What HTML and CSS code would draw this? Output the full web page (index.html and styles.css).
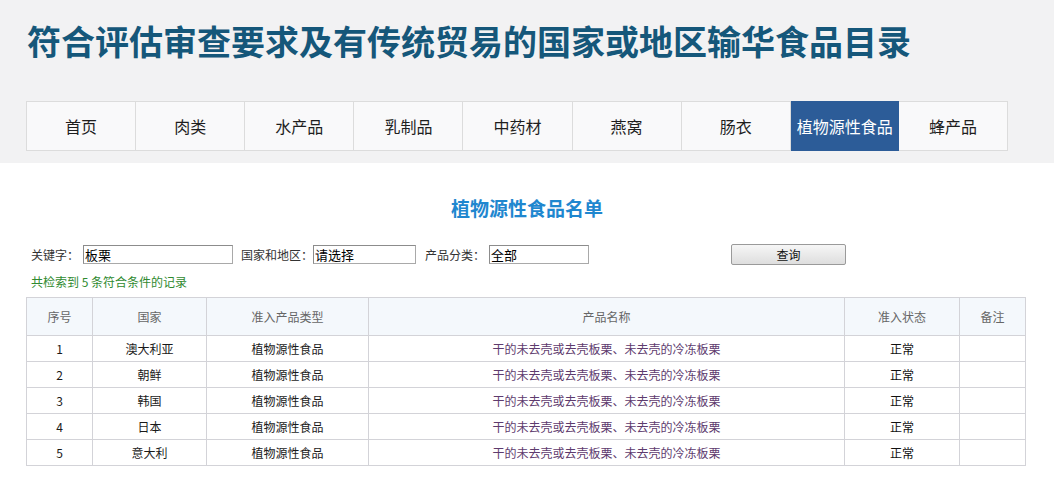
FILE: index.html
```html
<!DOCTYPE html>
<html lang="zh">
<head>
<meta charset="utf-8">
<title>符合评估审查要求及有传统贸易的国家或地区输华食品目录</title>
<link rel="stylesheet" href="styles.css">
</head>
<body>
<header class="top">
  <h1 class="site-title">符合评估审查要求及有传统贸易的国家或地区输华食品目录</h1>
  <nav class="nav">
    <a class="nav-item">首页</a>
    <a class="nav-item">肉类</a>
    <a class="nav-item">水产品</a>
    <a class="nav-item">乳制品</a>
    <a class="nav-item">中药材</a>
    <a class="nav-item">燕窝</a>
    <a class="nav-item">肠衣</a>
    <a class="nav-item active">植物源性食品</a>
    <a class="nav-item">蜂产品</a>
  </nav>
</header>
<main class="content">
  <h2 class="list-title">植物源性食品名单</h2>
  <form class="search">
    <label class="field-label">关键字：</label>
    <input class="field field-kw" type="text" value="板栗">
    <label class="field-label">国家和地区：</label>
    <input class="field field-country" type="text" value="请选择">
    <label class="field-label">产品分类：</label>
    <input class="field field-cat" type="text" value="全部">
    <button class="btn" type="button">查询</button>
  </form>
  <p class="result">共检索到&nbsp;5&nbsp;条符合条件的记录</p>
  <table class="grid">
    <colgroup>
      <col class="c1"><col class="c2"><col class="c3"><col class="c4"><col class="c5"><col class="c6">
    </colgroup>
    <thead>
      <tr><th>序号</th><th>国家</th><th>准入产品类型</th><th>产品名称</th><th>准入状态</th><th>备注</th></tr>
    </thead>
    <tbody>
      <tr><td>1</td><td>澳大利亚</td><td>植物源性食品</td><td class="pname">干的未去壳或去壳板栗、未去壳的冷冻板栗</td><td class="status">正常</td><td></td></tr>
      <tr><td>2</td><td>朝鲜</td><td>植物源性食品</td><td class="pname">干的未去壳或去壳板栗、未去壳的冷冻板栗</td><td class="status">正常</td><td></td></tr>
      <tr><td>3</td><td>韩国</td><td>植物源性食品</td><td class="pname">干的未去壳或去壳板栗、未去壳的冷冻板栗</td><td class="status">正常</td><td></td></tr>
      <tr><td>4</td><td>日本</td><td>植物源性食品</td><td class="pname">干的未去壳或去壳板栗、未去壳的冷冻板栗</td><td class="status">正常</td><td></td></tr>
      <tr><td>5</td><td>意大利</td><td>植物源性食品</td><td class="pname">干的未去壳或去壳板栗、未去壳的冷冻板栗</td><td class="status">正常</td><td></td></tr>
    </tbody>
  </table>
</main>
</body>
</html>
```
FILE: styles.css
```css
* { box-sizing: border-box; }
html, body { margin: 0; padding: 0; background: #fff; }
body {
  font-family: "Noto Sans CJK SC", "Noto Sans", "Liberation Sans", sans-serif;
  color: #222;
  width: 1054px;
  overflow: hidden;
}

.top {
  background: #f2f2f3;
  height: 163px;
  padding-top: 18px;
}
.site-title {
  margin: 0 0 0 27px;
  font-size: 34px;
  line-height: 46px;
  font-weight: 700;
  color: #15577a;
  letter-spacing: 0;
}
.nav {
  display: flex;
  margin: 37px 0 0 26px;
  width: 982px;
  height: 50px;
  border: 1px solid #dcdcdc;
  background: #f9f9fa;
}
.nav-item {
  flex: 1;
  display: flex;
  align-items: center;
  justify-content: center;
  font-size: 16px;
  color: #1e1e1e;
  border-right: 1px solid #dcdcdc;
}
.nav-item:last-child { border-right: none; }
.nav-item.active {
  background: #2c5c98;
  color: #fff;
  margin: -1px 0;
  border-right: none;
}

.content { padding-top: 32px; }
.list-title {
  margin: 0;
  text-align: center;
  font-size: 19px;
  line-height: 26px;
  font-weight: 700;
  color: #1f87cf;
}
.search {
  display: flex;
  align-items: center;
  margin: 23px 0 0 31px;
  height: 21px;
  font-size: 12px;
}
.field-label { color: #333; }
.field {
  height: 19px;
  padding: 0 1px;
  font-family: inherit;
  font-size: 13px;
  color: #000;
  border: 1px solid #a9a9a9;
  border-top-color: #8c8c8c;
  border-left-color: #8c8c8c;
  background: #fff;
}
.field-kw { width: 150px; margin: 0 8px 0 4px; }
.field-country { width: 103px; margin: 0 9px 0 0; }
.field-cat { width: 100px; margin: 0 0 0 4px; }
.btn {
  margin-left: 142px;
  width: 115px;
  height: 21px;
  padding: 0;
  font-family: inherit;
  font-size: 12px;
  color: #111;
  border: 1px solid #9a9a9a;
  border-radius: 2px;
  background: linear-gradient(#f6f6f6, #dedede);
}
.result {
  margin: 9px 0 0 31px;
  font-size: 12px;
  line-height: 16px;
  color: #2f8a2f;
}
.grid {
  margin: 7px 0 0 26px;
  width: 999px;
  border-collapse: collapse;
  table-layout: fixed;
  font-size: 12px;
}
.c1 { width: 66px; }
.c2 { width: 114px; }
.c3 { width: 162px; }
.c4 { width: 476px; }
.c5 { width: 115px; }
.c6 { width: 66px; }
.grid th, .grid td {
  border: 1px solid #d3d3d8;
  text-align: center;
  padding: 0;
}
.grid th {
  height: 38px;
  background: #f4f8fc;
  font-weight: 400;
  color: #666;
}
.grid td {
  height: 26px;
  color: #1a1a1a;
}
.grid td.pname { color: #5e3b6e; }
.grid td.status { color: #111; }
```
